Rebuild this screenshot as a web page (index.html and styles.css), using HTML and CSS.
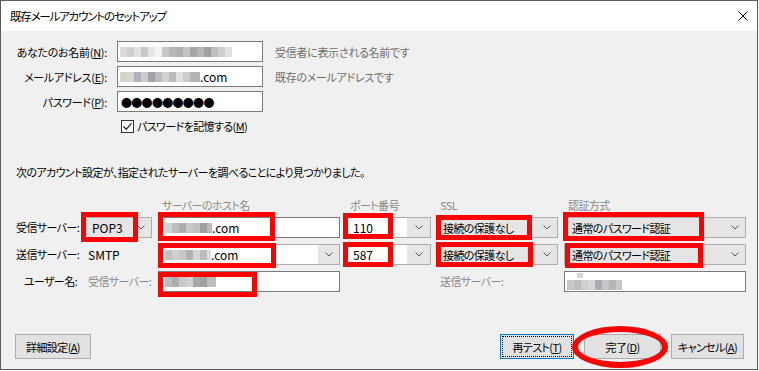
FILE: index.html
```html
<!DOCTYPE html>
<html lang="ja">
<head>
<meta charset="utf-8">
<title>既存メールアカウントのセットアップ</title>
<link rel="stylesheet" href="styles.css">
</head>
<body>
<div class="window">
  <header class="titlebar">
    <span class="title">既存メールアカウントのセットアップ</span>
    <svg class="close" viewBox="0 0 10 10"><path d="M0.5 0.5L9.5 9.5M9.5 0.5L0.5 9.5"/></svg>
  </header>
  <main class="content">
    <div class="ident">
      <label class="ilabel">あなたのお名前(<u>N</u>):</label>
      <div class="textbox"><span class="mosaic m-name"></span></div>
      <span class="hint">受信者に表示される名前です</span>

      <label class="ilabel">メールアドレス(<u>E</u>):</label>
      <div class="textbox"><span class="mosaic m-mail"></span><span class="lat">.com</span></div>
      <span class="hint">既存のメールアドレスです</span>

      <label class="ilabel">パスワード(<u>P</u>):</label>
      <div class="textbox"><span class="dots">●●●●●●●●●</span></div>
      <span></span>

      <span></span>
      <div class="remember">
        <span class="checkbox"><svg viewBox="0 0 11 11"><path d="M1.5 5.5L4.2 8.3L9.5 2.3"/></svg></span>
        <span>パスワードを記憶する(<u>M</u>)</span>
      </div>
    </div>

    <p class="msg">次のアカウント設定が、指定されたサーバーを調べることにより見つかりました。</p>

    <div class="servers">
      <span></span>
      <span></span>
      <span class="colhead ch-host">サーバーのホスト名</span>
      <span class="colhead ch-port">ポート番号</span>
      <span class="colhead ch-ssl">SSL</span>
      <span class="colhead ch-auth">認証方式</span>

      <span class="slabel">受信サーバー:</span>
      <div class="cell">
        <div class="combo list"><span class="val v-pop lat">POP3</span><span class="arrow"><svg viewBox="0 0 8 5"><path d="M0.5 0.5L4 4L7.5 0.5"/></svg></span></div>
        <span class="mark mk-pop"></span>
      </div>
      <div class="cell">
        <div class="textbox host"><span class="mosaic m-host1"></span><span class="lat">.com</span></div>
        <span class="mark mk-host1"></span>
      </div>
      <div class="cell">
        <div class="combo edit port"><span class="val v-port lat">110</span><span class="arrow a-port"><svg viewBox="0 0 8 5"><path d="M0.5 0.5L4 4L7.5 0.5"/></svg></span></div>
        <span class="mark mk-port1"></span>
      </div>
      <div class="cell">
        <div class="combo list"><span class="val v-ssl">接続の保護なし</span><span class="arrow a-ssl"><svg viewBox="0 0 8 5"><path d="M0.5 0.5L4 4L7.5 0.5"/></svg></span></div>
        <span class="mark mk-ssl1"></span>
      </div>
      <div class="cell">
        <div class="combo list"><span class="val v-auth">通常のパスワード認証</span><span class="arrow a-auth"><svg viewBox="0 0 8 5"><path d="M0.5 0.5L4 4L7.5 0.5"/></svg></span></div>
        <span class="mark mk-auth1"></span>
      </div>

      <span class="slabel">送信サーバー:</span>
      <span class="plain lat">SMTP</span>
      <div class="cell">
        <div class="combo edit host"><span class="val v-host"><span class="mosaic m-host2"></span><span class="lat">.com</span></span><span class="arrow a-host"><svg viewBox="0 0 8 5"><path d="M0.5 0.5L4 4L7.5 0.5"/></svg></span></div>
        <span class="mark mk-host2"></span>
      </div>
      <div class="cell">
        <div class="combo edit port"><span class="val v-port lat">587</span><span class="arrow a-port"><svg viewBox="0 0 8 5"><path d="M0.5 0.5L4 4L7.5 0.5"/></svg></span></div>
        <span class="mark mk-port2"></span>
      </div>
      <div class="cell">
        <div class="combo list"><span class="val v-ssl">接続の保護なし</span><span class="arrow a-ssl"><svg viewBox="0 0 8 5"><path d="M0.5 0.5L4 4L7.5 0.5"/></svg></span></div>
        <span class="mark mk-ssl2"></span>
      </div>
      <div class="cell">
        <div class="combo list"><span class="val v-auth">通常のパスワード認証</span><span class="arrow a-auth"><svg viewBox="0 0 8 5"><path d="M0.5 0.5L4 4L7.5 0.5"/></svg></span></div>
        <span class="mark mk-auth2"></span>
      </div>

      <span class="slabel">ユーザー名:</span>
      <span class="plain dim">受信サーバー:</span>
      <div class="cell">
        <div class="textbox host"><span class="mosaic m-user"></span></div>
        <span class="mark mk-user"></span>
      </div>
      <span></span>
      <span class="plain dim p-send">送信サーバー:</span>
      <div class="cell">
        <div class="textbox send"><span class="mosaic m-send"></span></div>
      </div>
    </div>

    <div class="actions">
      <button class="btn b-adv">詳細設定(<u>A</u>)</button>
      <span class="grow"></span>
      <div class="rgroup">
        <button class="btn b-retest">再テスト(<u>T</u>)</button>
        <button class="btn b-done">完了(<u>D</u>)<span class="ellipse"></span></button>
        <button class="btn b-cancel">キャンセル(<u>A</u>)</button>
      </div>
    </div>
  </main>
</div>
</body>
</html>
```

FILE: styles.css
```css
* { box-sizing: border-box; }
html, body { margin: 0; padding: 0; }
body {
  width: 759px;
  height: 371px;
  background: #ffffff;
  font-family: "Noto Sans CJK JP", "Noto Sans", sans-serif;
  font-size: 11px;
  letter-spacing: -0.6px;
  line-height: 16px;
  font-feature-settings: "palt";
  color: #000000;
}
u { text-decoration-thickness: 1px; text-underline-offset: 1px; }
.lat { font-size: 12px; letter-spacing: 0; }

.window {
  width: 758px;
  height: 370px;
  border: 1px solid #5a5a5a;
  background: #f0f0f0;
  display: flex;
  flex-direction: column;
}

.titlebar {
  flex: none;
  height: 30px;
  background: #ffffff;
  display: flex;
  align-items: center;
  justify-content: space-between;
  padding: 0 9px 0 9px;
}
.title { font-size: 11.5px; letter-spacing: -1.2px; }
.close { width: 10px; height: 10px; fill: none; stroke: #000; stroke-width: 1; }

.content {
  flex: 1;
  display: flex;
  flex-direction: column;
  padding: 10px 0 10px 0;
}

/* identity block */
.ident {
  display: grid;
  grid-template-columns: 100px 146px auto;
  grid-template-rows: 21px 21px 21px 18px;
  column-gap: 10px;
  row-gap: 4px;
  margin-left: 6px;
  align-items: center;
}
.ilabel { text-align: right; white-space: nowrap; letter-spacing: -0.3px; }
.hint { color: #6d6d6d; margin-left: 2px; white-space: nowrap; letter-spacing: -0.3px; }

.textbox {
  height: 21px;
  background: #ffffff;
  border: 1px solid #7a7a7a;
  display: flex;
  align-items: center;
  padding-left: 2px;
  white-space: nowrap;
}
.dots { font-size: 11px; letter-spacing: -0.7px; padding-left: 1px; }

.remember {
  grid-column: 2 / 4;
  align-self: end;
  display: flex;
  align-items: center;
  gap: 3px;
  padding-left: 4px;
  white-space: nowrap;
}
.checkbox {
  width: 13px;
  height: 13px;
  border: 1px solid #333333;
  background: #ffffff;
  display: flex;
}
.checkbox svg { width: 11px; height: 11px; fill: none; stroke: #000; stroke-width: 1.1; }

.msg { margin: 30px 0 0 15px; white-space: nowrap; }

/* servers table */
.servers {
  margin: 20px 0 0 15px;
  display: grid;
  grid-template-columns: 63px 67px 182px 85px 121px 182px;
  grid-template-rows: 17px 27px 27px 21px;
  column-gap: 6px;
  align-items: start;
}
.colhead { color: #8a8a8a; line-height: 11px; white-space: nowrap; }
.ch-host { padding-left: 4px; }
.ch-port { padding-left: 4px; }
.ch-ssl { padding-left: 3px; }
.ch-auth { padding-left: 4px; }

.slabel { line-height: 21px; text-align: right; padding-right: 2px; white-space: nowrap; }
.plain { line-height: 21px; padding-left: 3px; white-space: nowrap; }
.dim { color: #8a8a8a; }
.p-send { padding-left: 3px; }

.cell { position: relative; height: 21px; }

.combo {
  height: 21px;
  border: 1px solid #adadad;
  display: flex;
  align-items: center;
  white-space: nowrap;
}
.combo.list { background: #e5e5e5; }
.combo.edit { background: #ffffff; }
.val { flex: 1; display: flex; align-items: center; }
.v-pop { padding-left: 6px; }
.v-port { padding-left: 6px; }
.v-ssl { padding-left: 5px; }
.v-auth { padding-left: 7px; }
.v-host { padding-left: 6px; }
.arrow {
  width: 20px;
  height: 100%;
  display: flex;
  align-items: center;
  justify-content: center;
}
.combo.edit .arrow { background: #e5e5e5; }
.a-port { width: 23px; }
.a-host { width: 21px; }
.arrow svg { width: 8px; height: 5px; fill: none; stroke: #555555; stroke-width: 1; }

.textbox.host { padding-left: 6px; }
.textbox.send { padding-left: 2px; align-items: flex-start; padding-top: 1px; }

/* blurred (mosaic) values */
.mosaic { display: inline-block; height: 10px; flex: none; }
.m-name {
  width: 112px;
  background: linear-gradient(to right,
    #dcdcdc 0 7px, #d0d0d0 7px 14px, #e2e2e2 14px 21px, #c6c6c6 21px 28px,
    #e6e6e6 28px 35px, #f3f3f3 35px 42px, #c8c8c8 42px 49px, #b7b7b7 49px 56px,
    #b0b0b0 56px 63px, #c3c3c3 63px 70px, #a6a6a6 70px 77px, #b6b6b6 77px 84px,
    #a0a0a0 84px 91px, #bfbfbf 91px 98px, #cfcfcf 98px 105px, #e2e2e2 105px 112px);
}
.m-mail {
  width: 80px;
  background: linear-gradient(to right,
    #d7d2c9 0 7px, #d6d6d6 7px 14px, #adb2b8 14px 21px, #cbcbcb 21px 28px,
    #a0a4aa 28px 35px, #bdbdbd 35px 42px, #d2d2d2 42px 49px, #babeba 49px 56px,
    #e0e0e0 56px 63px, #c9ccc9 63px 70px, #b0b3b0 70px 80px);
}
.m-host1 {
  width: 47px;
  background: linear-gradient(to right,
    #d4d4d4 0 7px, #bdbdbd 7px 14px, #adadad 14px 21px, #cacaca 21px 28px,
    #c2c2c2 28px 35px, #9f9f9f 35px 42px, #b9b9b9 42px 47px);
}
.m-host2 {
  width: 46px;
  background: linear-gradient(to right,
    #c2c2c2 0 7px, #d0d0d0 7px 14px, #c9c9c9 14px 21px, #b2b2b2 21px 28px,
    #d4d4d4 28px 35px, #bbbbbb 35px 42px, #dcdcdc 42px 46px);
}
.m-user {
  width: 51px;
  background: linear-gradient(to right,
    #bdbdbd 0 7px, #adadad 7px 14px, #c8c8c8 14px 21px, #d0d0d0 21px 28px,
    #a9a9a9 28px 35px, #a0a0a0 35px 42px, #bebebe 42px 51px);
}
.m-send {
  width: 55px;
  height: 17px;
  background:
    linear-gradient(to right, transparent 0 10px, #d6d6d6 10px 16px, transparent 16px) top / 100% 5px no-repeat,
    linear-gradient(to right,
      #c8c8c8 0 7px, #bdbdbd 7px 14px, #cfcfcf 14px 21px, #d6d6d6 21px 28px,
      #a7aeb4 28px 35px, #c6c6c6 35px 42px, #b5b5b5 42px 49px, #c9c9c9 49px 55px) bottom / 100% 10px no-repeat;
}

/* annotation marks */
.mark { position: absolute; border: 5px solid #ff0000; pointer-events: none; }
.mk-pop { left: -4px; top: -5px; width: 57px; height: 30px; }
.mk-host1 { left: 0; top: -5px; width: 117px; height: 29px; }
.mk-port1 { left: -3px; top: -4px; width: 50px; height: 26px; }
.mk-ssl1 { left: -1px; top: -2px; width: 96px; height: 25px; }
.mk-auth1 { left: -1px; top: -5px; width: 141px; height: 29px; }
.mk-host2 { left: 0; top: -1px; width: 118px; height: 25px; }
.mk-port2 { left: -3px; top: -2px; width: 50px; height: 25px; }
.mk-ssl2 { left: -1px; top: -2px; width: 97px; height: 25px; }
.mk-auth2 { left: 1px; top: -1px; width: 138px; height: 25px; }
.mk-user { left: 0; top: 1px; width: 99px; height: 25px; }

/* buttons */
.actions {
  margin-top: auto;
  display: flex;
  align-items: center;
  padding: 0 13px 0 14px;
}
.grow { flex: 1; }
.rgroup { display: flex; gap: 10px; }
.btn {
  height: 25px;
  border: 1px solid #adadad;
  background: #e1e1e1;
  font: inherit;
  letter-spacing: inherit;
  color: #000;
  padding: 0;
  display: flex;
  align-items: center;
  justify-content: center;
  position: relative;
  white-space: nowrap;
}
.b-adv { width: 76px; }
.b-retest { width: 74px; border-color: #0078d7; outline: 1px dotted #000; outline-offset: -3px; }
.b-done { width: 77px; }
.b-cancel { width: 73px; }
.ellipse {
  position: absolute;
  z-index: 2;
  left: -13px;
  top: -9px;
  width: 96px;
  height: 42px;
  border: 6px solid #ff0000;
  border-radius: 50%;
}
```
